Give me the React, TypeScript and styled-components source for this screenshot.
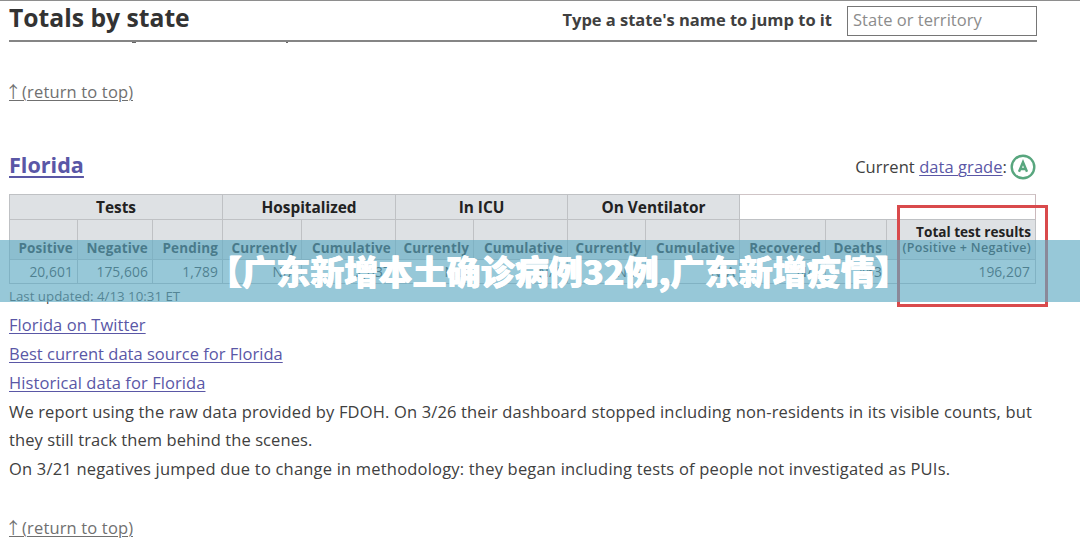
import React from 'react'
import styled, { createGlobalStyle } from 'styled-components'

interface columnInterface {
  name: string,
  value: string,
}

interface groupInterface {
  name: string,
  span: number,
}

const groups: Array<groupInterface> = [
  { name: 'Tests', span: 3 },
  { name: 'Hospitalized', span: 2 },
  { name: 'In ICU', span: 2 },
  { name: 'On Ventilator', span: 2 },
]

const columns: Array<columnInterface> = [
  { name: 'Positive', value: '20,601' },
  { name: 'Negative', value: '175,606' },
  { name: 'Pending', value: '1,789' },
  { name: 'Currently', value: 'N/A' },
  { name: 'Cumulative', value: '2,837' },
  { name: 'Currently', value: 'N/A' },
  { name: 'Cumulative', value: 'N/A' },
  { name: 'Currently', value: 'N/A' },
  { name: 'Cumulative', value: 'N/A' },
  { name: 'Recovered', value: 'N/A' },
  { name: 'Deaths', value: '463' },
]

const App: React.FC = () => {
  return <>
    <GlobalStyle />
    <Page>
      <StickyHeader>
        <Title>Totals by state</Title>
        <JumpLabel htmlFor='jump'>Type a state's name to jump to it</JumpLabel>
        <JumpInput id='jump' placeholder='State or territory' />
      </StickyHeader>
      <ScrolledEdge>
        <Speck $width={4} />
        <Speck $width={2} />
      </ScrolledEdge>

      <ReturnLink $top={34} href='#top'><span>↑</span> (return to top)</ReturnLink>

      <StateRow>
        <StateName href='#florida'>Florida</StateName>
        <Grade>
          Current <GradeLink href='#grade'>data grade</GradeLink>:
          <GradeBadge viewBox='0 0 26 26'>
            <circle cx='13' cy='13' r='11.3' />
            <path d='M9 17.8 L13 8.2 L17 17.8 M10.4 15 H15.6' />
          </GradeBadge>
        </Grade>
      </StateRow>

      <Table>
        {groups.map((v) => <GroupCell key={v.name} $span={v.span}>{v.name}</GroupCell>)}
        <EmptyCell />
        {columns.map((v, i) => <HeadCell key={i}>{v.name}</HeadCell>)}
        <TotalHead>
          <TotalName>Total test results</TotalName>
          <TotalNote>(Positive + Negative)</TotalNote>
        </TotalHead>
        {columns.map((v, i) => <ValueCell key={i}>{v.value}</ValueCell>)}
        <ValueCell $last>196,207</ValueCell>
        <Highlight />
      </Table>
      <Updated>Last updated: 4/13 10:31 ET</Updated>

      <Notes>
        <NoteLink $spacing={0.08} href='#twitter'>Florida on Twitter</NoteLink>
        <NoteLink $spacing={0.02} href='#source'>Best current data source for Florida</NoteLink>
        <NoteLink $spacing={0.08} href='#history'>Historical data for Florida</NoteLink>
        <NoteLine $spacing={0.147}>We report using the raw data provided by FDOH. On 3/26 their dashboard stopped including non-residents in its visible counts, but</NoteLine>
        <NoteLine $spacing={0.08}>they still track them behind the scenes.</NoteLine>
        <NoteLine $spacing={0.195}>On 3/21 negatives jumped due to change in methodology: they began including tests of people not investigated as PUIs.</NoteLine>
      </Notes>

      <ReturnLink $top={29} href='#top'><span>↑</span> (return to top)</ReturnLink>
    </Page>
    <Banner>【广东新增本土确诊病例32例,广东新增疫情】</Banner>
  </>
}

const GlobalStyle = createGlobalStyle`
  * {
    box-sizing: border-box;
  }

  body {
    margin: 0;
    overflow: hidden;

    background-color: #fff;
    color: #404040;
    font-family: 'Open Sans', 'Noto Sans', sans-serif;
    font-size: 16.5px;
  }
`

const Page = styled.main`
  height: 542px;
  padding: 0 43px 0 9px;
  overflow: hidden;

  border-top: 1px solid #8e8e8e;
`

const StickyHeader = styled.header`
  display: flex;
  align-items: center;

  height: 41px;

  border-bottom: 2px solid #858585;
`

const Title = styled.h2`
  flex: 1;
  margin: 0;
  padding-bottom: 6px;

  color: #333;
  font-size: 24.7px;
  line-height: 32px;
  white-space: nowrap;
`

const JumpLabel = styled.label`
  margin-right: 15px;
  padding-bottom: 2px;

  font-size: 16.5px;
  font-weight: 700;
  letter-spacing: -0.02px;
  white-space: nowrap;
`

const JumpInput = styled.input`
  width: 190px;
  height: 30px;
  padding: 0 6px 2px 5px;

  border: 1px solid #767676;
  font-family: inherit;
  font-size: 16.5px;
  letter-spacing: 0.04px;

  &::placeholder {
    color: #8c8c8c;
  }
`

const ScrolledEdge = styled.div`
  display: flex;
  gap: 150px;

  height: 1px;
  padding-left: 123px;
`

const Speck = styled.i<{ $width: number }>`
  width: ${(p) => p.$width}px;
  height: 1px;

  background-color: #666;
`

const ReturnLink = styled.a<{ $top: number }>`
  display: block;
  width: max-content;
  height: 28px;
  margin-top: ${(p) => p.$top}px;
  overflow: hidden;

  color: #707070;
  letter-spacing: 0.15px;
  line-height: 28px;
  text-decoration: underline;
  text-underline-offset: 2px;
  text-decoration-thickness: 1px;

  /* the arrow has a full-width box, trim both sides */
  span {
    margin: 0 -4px;

    font-family: 'Noto Sans CJK SC', sans-serif;
  }
`

const StateRow = styled.div`
  display: flex;
  align-items: center;
  justify-content: space-between;

  height: 34px;
  margin-top: 45px;
`

const StateName = styled.a`
  padding-bottom: 5px;

  color: #5a57a6;
  font-size: 21.6px;
  font-weight: 700;
  text-underline-offset: 3px;
  text-decoration-thickness: 2px;
`

const Grade = styled.div`
  display: flex;
  align-items: center;

  padding: 0 1px 1px 0;
  letter-spacing: 0.06px;
  white-space: pre;
`

const GradeLink = styled.a`
  color: #5a57a6;
  text-underline-offset: 2px;
  text-decoration-thickness: 1px;
`

const GradeBadge = styled.svg`
  width: 26px;
  height: 26px;
  margin-left: 3px;

  fill: none;
  stroke: #58a67e;
  stroke-width: 2.4;
`

const Table = styled.div`
  position: relative;

  display: grid;
  grid-template-columns: 68px 75px 70px 79px 94px 78px 94px 78px 94px 86px 61px 149px;
  grid-template-rows: 26px 40px 24px;

  width: 1027px;
  margin-top: 10px;

  border-left: 1px solid #bfc1c4;
`

const Cell = styled.div`
  display: flex;
  align-items: center;
  justify-content: flex-end;

  border-right: 1px solid #bfc1c4;
  border-bottom: 1px solid #bfc1c4;
  white-space: nowrap;
`

const GroupCell = styled(Cell)<{ $span: number }>`
  grid-column: span ${(p) => p.$span};
  justify-content: center;

  border-top: 1px solid #bfc1c4;
  background-color: #dee1e4;
  color: #222;
  font-size: 15.4px;
  font-weight: 700;
`

const EmptyCell = styled(Cell)`
  grid-column: span 3;

  border-top: 1px solid #cfc4c6;
  border-right-color: #cbb9bc;
`

const HeadCell = styled(Cell)`
  align-items: flex-end;
  padding: 0 4px 2px;

  background-color: #dee1e4;
  color: #222;
  font-size: 13.5px;
  font-weight: 700;
  letter-spacing: 0.15px;
`

const TotalHead = styled(Cell)`
  flex-direction: column;
  align-items: flex-end;
  padding: 0 4px 3px;

  background-color: #dee1e4;
  line-height: 16px;
`

const TotalName = styled.strong`
  color: #222;
  font-size: 13.6px;
`

const TotalNote = styled.span`
  color: #222;
  font-size: 12.5px;
  font-weight: 600;
  letter-spacing: 0.3px;
`

const ValueCell = styled(Cell)<{ $last?: boolean }>`
  padding-right: ${(p) => p.$last ? 5 : 4}px;

  color: #333;
  font-size: 13.8px;
  letter-spacing: 0.1px;
`

/* red frame drawn over the totals column */
const Highlight = styled.div`
  position: absolute;
  top: 11px;
  left: 887px;

  width: 151px;
  height: 102px;

  border: 3px solid #d94a4c;
`

const Updated = styled.div`
  height: 22px;

  font-size: 13.3px;
  line-height: 24px;
`

const Notes = styled.div`
  display: flex;
  flex-direction: column;
  align-items: flex-start;

  margin-top: 5px;

  line-height: 28.84px;
  white-space: nowrap;
`

const NoteLink = styled.a<{ $spacing: number }>`
  color: #5a57a6;
  letter-spacing: ${(p) => p.$spacing}px;
  text-underline-offset: 2px;
  text-decoration-thickness: 1px;
`

const NoteLine = styled.span<{ $spacing: number }>`
  letter-spacing: ${(p) => p.$spacing}px;
`

/* translucent caption strip laid across the page */
const Banner = styled.div`
  position: absolute;
  top: 240px;
  left: 0;

  width: 1080px;
  height: 62px;
  padding-left: 208px;

  background-color: rgba(96, 171, 195, 0.65);
  color: #fff;
  font-family: 'Noto Sans CJK SC', sans-serif;
  font-size: 34px;
  font-weight: 900;
  letter-spacing: 0.08px;
  line-height: 61px;
  text-shadow: 0.5px 0 #fff, -0.5px 0 #fff;
  white-space: nowrap;
`

export default App
